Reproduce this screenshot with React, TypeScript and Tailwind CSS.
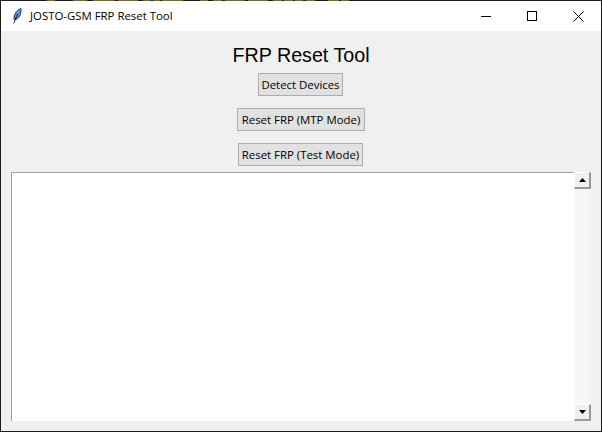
const strip: [number, number][] = [[47,8],[73,14],[93,22],[118,20],[143,8],[153,7],[162,21],[200,8],[213,9],[225,20],[248,20],[273,9],[284,9],[295,8],[306,9],[328,11],[341,8]];

export default function App() {
  const ui = "font-['Open_Sans','Noto_Sans','Liberation_Sans',sans-serif]";
  const btn = `h-[23px] flex items-center justify-center whitespace-nowrap border border-[#adadad] bg-[#e1e1e1] text-[11.4px] leading-none text-black ${ui}`;
  const sb = "w-[17px] h-[17px] flex items-center justify-center bg-[#f0f0f0] border-t border-l border-t-white border-l-white border-r-2 border-b-2 border-r-[#9a9a9a] border-b-[#9a9a9a]";
  return (
    <div className="w-[602px] h-[432px] flex flex-col bg-[#1c1c1c] overflow-hidden">
      <svg width="602" height="1" viewBox="0 0 602 1" className="block shrink-0">
        {strip.map(([x, w]) => (
          <rect key={x} x={x} y="0" width={w} height="1" fill="#7a6a14" />
        ))}
      </svg>
      <div className="flex-1 min-h-0 flex flex-col border-x border-b border-[#1c1c1c] bg-[#f0f0f0]">
        <div className="h-[30px] shrink-0 flex items-center bg-white pl-[12px]">
          <svg width="9" height="16" viewBox="0 0 9 16" className="shrink-0">
            <path d="M1 11.5 C0.5 7 3 2 8 0.5 C8.5 5 7 10 3 11.5 Z" fill="#4a8ade" stroke="#16263f" strokeWidth="0.8" />
            <path d="M3 9 C3.5 6 5 4 6.5 2.5" stroke="#bcd8f7" strokeWidth="0.7" fill="none" />
            <path d="M0.8 15.5 L4.5 5.5" stroke="#0d1522" strokeWidth="0.9" fill="none" />
          </svg>
          <span className={`ml-[8px] text-[11.4px] leading-none whitespace-nowrap text-black ${ui}`}>JOSTO-GSM FRP Reset Tool</span>
          <div className="ml-auto flex h-full items-center">
            <div className="w-[46px] h-full flex items-center justify-center">
              <svg width="10" height="10" viewBox="0 0 10 10"><path d="M0 5.5H10" stroke="#000" strokeWidth="1" /></svg>
            </div>
            <div className="w-[46px] h-full flex items-center justify-center">
              <svg width="10" height="10" viewBox="0 0 10 10"><rect x="0.5" y="0.5" width="9" height="9" fill="none" stroke="#000" /></svg>
            </div>
            <div className="w-[46px] h-full flex items-center justify-center">
              <svg width="11" height="11" viewBox="0 0 11 11"><path d="M0.5 0.5L10.5 10.5M10.5 0.5L0.5 10.5" stroke="#000" /></svg>
            </div>
          </div>
        </div>
        <div className="flex-1 min-h-0 flex flex-col items-center">
          <h1 className="mt-[12px] h-[24px] whitespace-nowrap text-[19.7px] leading-[24px] font-normal text-black font-['Liberation_Sans',sans-serif]">FRP Reset Tool</h1>
          <button className={`${btn} mt-[6px] mr-[1px] w-[85px]`}>Detect Devices</button>
          <button className={`${btn} mt-[12px] w-[128px]`}>Reset FRP (MTP Mode)</button>
          <button className={`${btn} mt-[12px] mr-[1px] w-[125px]`}>Reset FRP (Test Mode)</button>
          <div className="mt-[6px] self-stretch flex pl-[10px] h-[249px]">
            <div className="w-[563px] bg-white border-l border-t border-[#a0a0a0]" />
            <div className="w-[17px] flex flex-col">
              <div className={sb}>
                <svg width="7" height="4" viewBox="0 0 7 4"><path d="M3.5 0L7 4H0Z" fill="#000" /></svg>
              </div>
              <div className="flex-1 bg-[repeating-conic-gradient(#f0f0f0_0_25%,#ffffff_0_50%)] bg-[length:2px_2px]" />
              <div className={sb}>
                <svg width="7" height="4" viewBox="0 0 7 4"><path d="M0 0H7L3.5 4Z" fill="#000" /></svg>
              </div>
            </div>
          </div>
        </div>
      </div>
    </div>
  );
}
